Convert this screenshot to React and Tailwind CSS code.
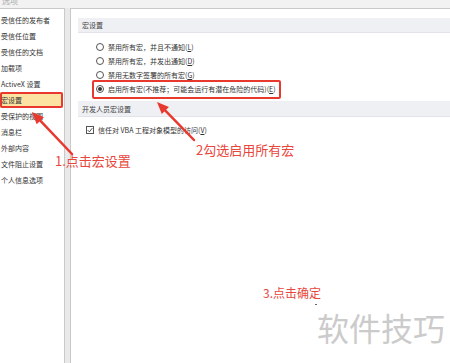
import React from "react";

const leftItems = [
    "受信任的发布者",
    "受信任位置",
    "受信任的文档",
    "加载项",
    "ActiveX 设置",
    "宏设置",
    "受保护的视图",
    "消息栏",
    "外部内容",
    "文件阻止设置",
    "个人信息选项",
];

// red annotation arrow, head at (x2, y2)
const Arrow = ({ x1, y1, x2, y2 }) => {
    const a = Math.atan2(y2 - y1, x2 - x1);
    const len = 12;
    const half = 5;
    const bx = x2 - len * Math.cos(a);
    const by = y2 - len * Math.sin(a);
    const px = -Math.sin(a) * half;
    const py = Math.cos(a) * half;
    return (
        <g>
            <line x1={x1} y1={y1} x2={bx} y2={by} stroke="#e8392f" strokeWidth="2.5" strokeLinecap="round" />
            <polygon points={`${x2},${y2} ${bx + px},${by + py} ${bx - px},${by - py}`} fill="#e8392f" />
        </g>
    );
};

const Radio = ({ checked }) => (
    <span className="w-[8px] h-[8px] rounded-full border border-[#555] bg-white flex items-center justify-center shrink-0">
        {checked && <span className="w-[4px] h-[4px] rounded-full bg-[#333]" />}
    </span>
);

const App = () => {
    return (
        <div className="relative w-[450px] h-[363px] overflow-hidden bg-[#f2f2f2] font-['Noto_Sans_CJK_SC','Noto_Sans',sans-serif] text-[#333]">
            {/* title strip, cut off at the top */}
            <div className="h-[8px] relative overflow-hidden">
                <span className="absolute left-[2px] -top-[3px] text-[8px] leading-[8px] text-[#aaa]">选项</span>
            </div>

            <div className="flex h-[355px]">
                {/* category list */}
                <div className="w-[65px] bg-white border-t border-r border-[#c9c9c9] pt-[3px]">
                    {leftItems.map((item) => (
                        <div
                            key={item}
                            className={
                                item === "宏设置"
                                    ? "h-[16px] leading-[16px] text-[7px] pl-[1px] whitespace-nowrap bg-[#fce3a2] ring-2 ring-inset ring-[#e8392f] rounded-[2px] mr-[1px]"
                                    : "h-[16px] leading-[16px] text-[7px] pl-[1px] whitespace-nowrap"
                            }
                        >
                            {item}
                        </div>
                    ))}
                </div>

                <div className="w-[5px] bg-[#e9e9e9]" />

                {/* settings panel */}
                <div className="flex-1 bg-white border-t border-l border-[#c9c9c9] pt-[9px] pl-[7px]">
                    <div className="h-[15px] leading-[15px] bg-[#eff0f3] border-b border-[#e2e4ea] text-[7px] pl-[4px] text-[#444]">
                        宏设置
                    </div>

                    <div className="mt-[7px] pl-[18px] text-[7px]">
                        <div className="h-[14px] flex items-center gap-[4px]">
                            <Radio />
                            <span>禁用所有宏，并且不通知(<span className="underline">L</span>)</span>
                        </div>
                        <div className="h-[14px] flex items-center gap-[4px]">
                            <Radio />
                            <span>禁用所有宏，并发出通知(<span className="underline">D</span>)</span>
                        </div>
                        <div className="h-[14px] flex items-center gap-[4px]">
                            <Radio />
                            <span>禁用无数字签署的所有宏(<span className="underline">G</span>)</span>
                        </div>
                        <div className="relative h-[14px] flex items-center gap-[4px]">
                            <Radio checked />
                            <span>启用所有宏(不推荐；可能会运行有潜在危险的代码)(<span className="underline">E</span>)</span>
                            <span className="absolute -left-[4px] w-[189px] -top-[2px] -bottom-[3px] border-2 border-[#e8392f] rounded-[2px]" />
                        </div>
                    </div>

                    <div className="mt-[5px] h-[16px] leading-[16px] bg-[#eff0f3] border-b border-[#e2e4ea] text-[7px] pl-[4px] text-[#444]">
                        开发人员宏设置
                    </div>

                    <div className="mt-[6px] pl-[8px] h-[14px] flex items-center gap-[4px] text-[7px]">
                        <span className="w-[8px] h-[8px] border border-[#555] flex items-center justify-center shrink-0">
                            <svg width="6" height="6" viewBox="0 0 6 6">
                                <path d="M0.8 3.2 L2.4 4.8 L5.3 1.2" fill="none" stroke="#333" strokeWidth="0.9" />
                            </svg>
                        </span>
                        <span>信任对 VBA 工程对象模型的访问(<span className="underline">V</span>)</span>
                    </div>
                </div>
            </div>

            {/* annotations */}
            <svg className="absolute inset-0 pointer-events-none" width="450" height="363">
                <Arrow x1={72} y1={154} x2={32} y2={112} />
                <Arrow x1={194} y1={140} x2={157} y2={102} />
            </svg>
            <span className="absolute left-[55px] top-[153px] text-[13px] leading-[16px] text-[#e8463c] whitespace-nowrap">
                1.点击宏设置
            </span>
            <span className="absolute left-[196px] top-[142px] text-[13px] leading-[16px] text-[#e8463c] whitespace-nowrap">
                2勾选启用所有宏
            </span>
            <span className="absolute left-[263px] top-[285px] text-[12px] leading-[15px] text-[#e8463c] whitespace-nowrap">
                3.点击确定
            </span>
            <span className="absolute left-[315px] top-[304px] w-[2px] h-[1px] bg-[#666]" />
            <span className="absolute left-[317px] top-[307px] text-[32px] leading-[40px] text-[#cbcbcb] whitespace-nowrap">
                软件技巧
            </span>
        </div>
    );
};

export default App;
